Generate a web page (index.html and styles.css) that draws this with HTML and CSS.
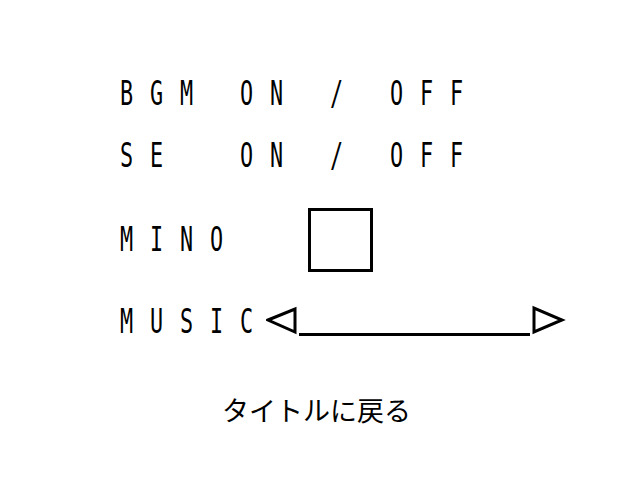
FILE: index.html
```html
<!DOCTYPE html>
<html lang="ja">
<head>
<meta charset="utf-8">
<link rel="stylesheet" href="styles.css">
</head>
<body>
<main class="screen">
  <div class="row row-bgm">
    <span class="c">B</span><span class="c">G</span><span class="c">M</span><span class="c"></span><span class="c">O</span><span class="c">N</span><span class="c"></span><span class="c slash">/</span><span class="c"></span><span class="c">O</span><span class="c">F</span><span class="c">F</span>
  </div>
  <div class="row row-se">
    <span class="c">S</span><span class="c">E</span><span class="c"></span><span class="c"></span><span class="c">O</span><span class="c">N</span><span class="c"></span><span class="c slash">/</span><span class="c"></span><span class="c">O</span><span class="c">F</span><span class="c">F</span>
  </div>
  <div class="row row-mino">
    <span class="c">M</span><span class="c">I</span><span class="c">N</span><span class="c">O</span>
    <div class="mino-box"></div>
  </div>
  <div class="row row-music">
    <span class="c">M</span><span class="c">U</span><span class="c">S</span><span class="c">I</span><span class="c">C</span>
    <svg class="slider" width="300" height="34" viewBox="0 0 300 34">
      <polygon points="2,15 29,4 29,27" fill="none" stroke="#000" stroke-width="3" stroke-linejoin="miter"/>
      <rect x="33" y="28" width="231" height="3" fill="#000"/>
      <polygon points="268,3 268,27 296,15" fill="none" stroke="#000" stroke-width="3" stroke-linejoin="miter"/>
    </svg>
  </div>
  <div class="back">タイトルに戻る</div>
</main>
</body>
</html>
```

FILE: styles.css
```css
html, body {
  margin: 0;
  padding: 0;
  background: #fff;
}
.screen {
  width: 640px;
  height: 480px;
  box-sizing: border-box;
  padding: 73px 0 0 120px;
  color: #000;
  font-family: "DejaVu Sans Mono", monospace;
}
.row {
  display: flex;
  align-items: center;
  height: 42px;
}
.row-se {
  margin-top: 20px;
}
.row-mino {
  margin-top: 31px;
  height: 64px;
}
.row-music {
  margin-top: 33px;
  height: 34px;
}
.c {
  display: inline-block;
  width: 30px;
  flex: 0 0 30px;
  height: 34px;
  line-height: 34px;
  font-size: 33px;
  transform: scaleX(0.66);
  transform-origin: left center;
  white-space: pre;
}
.slash {
  font-weight: normal;
}
.mino-box {
  margin-left: 68px;
  width: 65px;
  height: 64px;
  box-sizing: border-box;
  border: 3px solid #000;
}
.slider {
  display: block;
  margin-left: -4px;
}
.back {
  margin-top: 51px;
  padding-left: 102px;
  font-family: "Noto Sans CJK JP", sans-serif;
  font-size: 27px;
  line-height: 40px;
}
```
